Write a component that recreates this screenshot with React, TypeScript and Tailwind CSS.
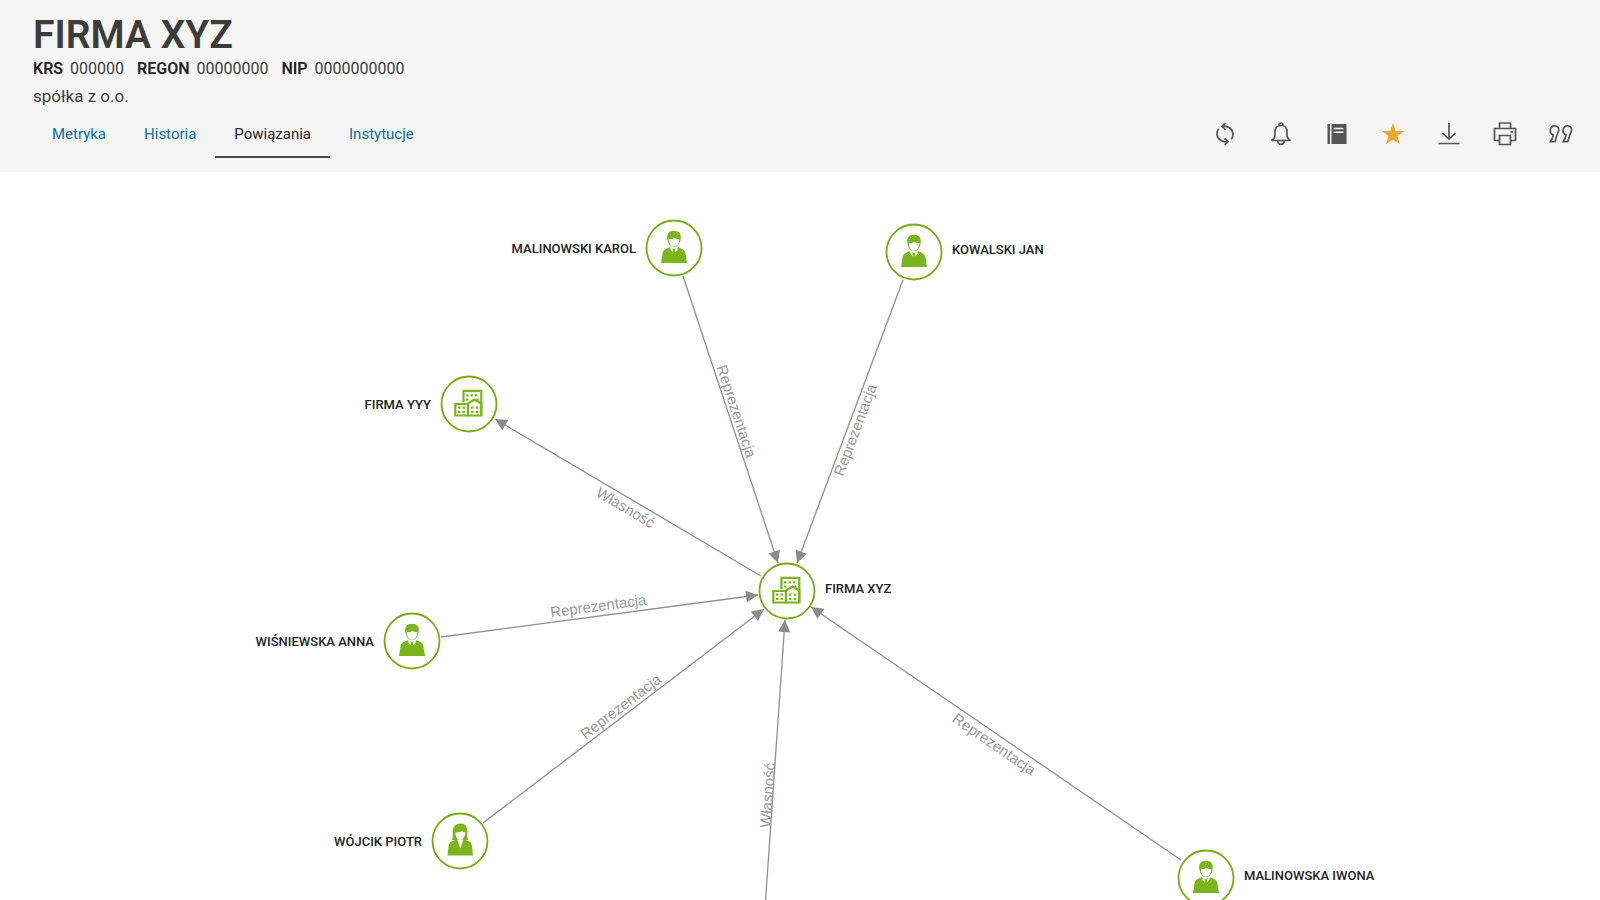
import type { ReactNode } from "react";

type Kind = "man" | "woman" | "company";

type GraphNode = {
  id: string;
  name: string;
  kind: Kind;
  x: number;
  y: number;
  side: "left" | "right";
};

type Edge = {
  from: [number, number];
  to: [number, number];
  label: string;
  at: number;
  dy: number;
};

const nodes: GraphNode[] = [
  { id: "karol", name: "MALINOWSKI KAROL", kind: "man", x: 674, y: 76, side: "left" },
  { id: "jan", name: "KOWALSKI JAN", kind: "man", x: 914, y: 80, side: "right" },
  { id: "yyy", name: "FIRMA YYY", kind: "company", x: 469, y: 232, side: "left" },
  { id: "xyz", name: "FIRMA XYZ", kind: "company", x: 787, y: 419, side: "right" },
  { id: "anna", name: "WIŚNIEWSKA ANNA", kind: "man", x: 412, y: 469, side: "left" },
  { id: "piotr", name: "WÓJCIK PIOTR", kind: "woman", x: 460, y: 669, side: "left" },
  { id: "iwona", name: "MALINOWSKA IWONA", kind: "man", x: 1206, y: 706, side: "right" },
];

// "at" is the label position along the line, "dy" its distance from it
const edges: Edge[] = [
  { from: [683, 104], to: [778, 391], label: "Reprezentacja", at: 0.48, dy: -3 },
  { from: [903, 108], to: [797, 391], label: "Reprezentacja", at: 0.52, dy: 13 },
  { from: [761, 404], to: [495, 247], label: "Własność", at: 0.49, dy: 15 },
  { from: [441, 465], to: [758, 423], label: "Reprezentacja", at: 0.5, dy: -5 },
  { from: [483, 651], to: [764, 437], label: "Reprezentacja", at: 0.51, dy: -4 },
  { from: [765, 736], to: [785, 448], label: "Własność", at: 0.39, dy: 0 },
  { from: [1181, 688], to: [811, 435], label: "Reprezentacja", at: 0.49, dy: 15 },
];

const tabs = ["Metryka", "Historia", "Powiązania", "Instytucje"];

const ToolIcon = ({ children }: { children: ReactNode }) => (
  <svg viewBox="0 0 24 24" className="size-6 overflow-visible" fill="none" stroke="currentColor" strokeWidth="1.7">
    {children}
  </svg>
);

const tools = [
  {
    name: "Odśwież",
    icon: (
      <ToolIcon>
        <path d="M9.500 4.200c5.500-.8 10.500 2.800 10.500 8 0 1.900-.6 3.600-1.700 5M14.500 19.800c-5.500.8-10.500-2.800-10.500-8 0-1.900.6-3.600 1.700-5" />
        <path d="M12.500 1 9 4.300l3.500 3.400M11.500 16.300l3.500 3.400-3.500 3.300" />
      </ToolIcon>
    ),
  },
  {
    name: "Powiadomienia",
    icon: (
      <ToolIcon>
        <path d="M2.500 18.500h19c-2.400-1.200-3.500-2.600-3.500-5.500v-3.500c0-3.700-2.500-6-6-6s-6 2.300-6 6V13c0 2.900-1.100 4.300-3.500 5.500Z" />
        <path d="M10.200 3.500V2.800a1.800 1.800 0 0 1 3.600 0v.7M8.800 18.800a3.200 3.600 0 0 0 6.400 0" />
      </ToolIcon>
    ),
  },
  {
    name: "Notatnik",
    icon: (
      <ToolIcon>
        <path d="M2.500 2h2.500v20H2.500zM6.500 2h15v20h-15z" fill="currentColor" stroke="none" />
        <path d="M8.500 6.500h10M8.500 10.200h10" stroke="#f5f5f5" strokeWidth="1.400" />
      </ToolIcon>
    ),
  },
  {
    name: "Ulubione",
    icon: (
      <ToolIcon>
        <path d="M12 .8l2.700 8.100 8.500.1-6.800 5.100 2.500 8.200L12 17.400l-6.900 4.900 2.500-8.200L.8 9l8.500-.1Z" fill="#eda62f" stroke="none" />
      </ToolIcon>
    ),
  },
  {
    name: "Pobierz",
    icon: (
      <ToolIcon>
        <path d="M12 1v16M5.500 11l6.500 6 6.500-6M1.500 21.500h21" />
      </ToolIcon>
    ),
  },
  {
    name: "Drukuj",
    icon: (
      <ToolIcon>
        <path d="M6.500 6.500V1h11v5.500M6.500 18.500h-5v-12h21v12h-4.500" />
        <path d="M6.500 13.500h11V22.500h-11zM17.500 9.800h2.500" />
      </ToolIcon>
    ),
  },
  {
    name: "Cytuj",
    icon: (
      <ToolIcon>
        <path d="M4.300 12.800C2 11.800.9 10.500 1.200 8.300 1.600 5.500 3.400 3.800 5.900 3.800s4.200 1.800 3.800 4.600c-.2 2-1.600 4-2.200 6-.6 1.900-.9 3.700-1.600 5.200H1.600c1.600-2.200 2.200-4.100 2.700-6.800Z" />
        <path d="M17.100 12.800c-2.300-1-3.400-2.300-3.100-4.500.4-2.800 2.200-4.500 4.700-4.500s4.200 1.800 3.800 4.600c-.2 2-1.600 4-2.200 6-.6 1.900-.9 3.700-1.600 5.200h-4.300c1.600-2.200 2.200-4.100 2.700-6.800Z" />
      </ToolIcon>
    ),
  },
];

const Man = () => (
  <>
    <path d="M-6.500-8C-8-14-5-17.300 0-17.300S8-14 6.500-8C5.500-3.500 3-.8 0-.8S-5.500-3.500-6.500-8Z" fill="#7ab51d" />
    <path d="M-5.200-8.800c2.400.3 4-.4 5.200-1.800 1.500 1.200 3.400 1.800 5.400 1.700C5.200-4.300 3-1.200 0-1.200s-4.800-3-5.200-7.600Z" fill="#fff" />
    <path d="M-13 15-11.500 5.500C-11 2.500-9 1-4.500-.8L0 1.300 4.500-.8C9 1 11 2.500 11.500 5.500L13 15Z" fill="#7ab51d" />
    <path d="M-3.500-1-1.300.8-1.300 4.500-3.600 1.800ZM3.500-1 1.300.8 1.300 4.500 3.600 1.800Z" fill="#fff" />
  </>
);

const Woman = () => (
  <>
    <path d="M-7.800-1C-7-3.500-7.500-6-7.200-10-6.800-14.500-4-17.500.5-17.500S7.300-14.500 7.300-10c0 4-.2 6.500.8 9Z" fill="#7ab51d" />
    <path d="M-4.700-8.500C-1-8.300 1-9.300 2.200-10.500 3-9.300 4-8.800 5.300-8.600 5.200-4.500 3.300-1.500.3-1.500S-4.500-4-4.700-8.500Z" fill="#fff" />
    <path d="M-12.500 14.500-11.500 5C-11 2-9 .3-5-1H5.500C9.500.3 11.500 2 12 5l1 9.500Z" fill="#7ab51d" />
    <path d="M-2.800-1.500.4 7.500 3.500-1.500Z" fill="#fff" />
  </>
);

const Company = () => (
  <g fill="none" stroke="#7ab51d" strokeWidth="2.200">
    <path d="M-5.500-2v-11.200h17.800V11.500M-13.700 0h12.700v11.500h-12.700z" />
    <path d="M-1 11.500V-.5l6.500-4L12.300-.5v12Z" />
    <path
      d="M-3-8.700h2.400M1.500-8.700h2.400M6-8.700h2.400M-3-4.500h2.400M7.500-4.500h2M-11 3.700h2.400M-6.500 3.700h2.400M-11 8h2.400M-6.500 8h2.400M2 3.700h2.400M6.800 3.700h2.400M2 8h2.400M6.800 8h2.400"
      strokeWidth="2.200"
    />
  </g>
);

const pictograms: Record<Kind, () => ReactNode> = { man: Man, woman: Woman, company: Company };

const EdgeLine = ({ from, to, label, at, dy }: Edge) => {
  const x = from[0] + (to[0] - from[0]) * at;
  const y = from[1] + (to[1] - from[1]) * at;
  const heading = (Math.atan2(to[1] - from[1], to[0] - from[0]) * 180) / Math.PI;
  // keep labels readable from the left
  const tilt = heading > 90 ? heading - 180 : heading < -90 ? heading + 180 : heading;

  return (
    <g>
      <line x1={from[0]} y1={from[1]} x2={to[0]} y2={to[1]} stroke="#8f8f8f" strokeWidth="1.300" />
      <path d="M0 0-12-6v12Z" fill="#8c8c8c" transform={`translate(${to[0]} ${to[1]}) rotate(${heading})`} />
      <text
        y={dy}
        textAnchor="middle"
        transform={`translate(${x} ${y}) rotate(${tilt})`}
        className="fill-[#999999] font-['Liberation_Sans',Arial,sans-serif] text-[15px]"
      >
        {label}
      </text>
    </g>
  );
};

const NodeMark = ({ name, kind, x, y, side }: GraphNode) => {
  const Pictogram = pictograms[kind];
  return (
    <g transform={`translate(${x} ${y})`}>
      <circle r="27.500" fill="#fff" stroke="#76ac14" strokeWidth="1.800" />
      <Pictogram />
      <text
        x={side === "left" ? -38 : 38}
        y={side === "left" ? 5 : 2}
        textAnchor={side === "left" ? "end" : "start"}
        className="fill-[#222222] text-[13px] font-medium"
      >
        {name}
      </text>
    </g>
  );
};

const Identifier = ({ label, value }: { label: string; value: string }) => (
  <div className="flex gap-[7px]">
    <dt className="font-semibold text-[#222222]">{label}</dt>
    <dd>{value}</dd>
  </div>
);

export default function App() {
  return (
    <div className="flex h-screen min-h-[600px] flex-col bg-white font-[Roboto,sans-serif] text-[#3c3c3b]">
      {/* Company header */}
      <header className="bg-[#f5f5f5] pt-3 pr-[27px] pb-[14px] pl-[33px]">
        <h1 className="text-[39px] leading-[46px] font-semibold">FIRMA XYZ</h1>
        <dl className="flex flex-wrap gap-x-[13px] text-base leading-[22px]">
          <Identifier label="KRS" value="000000" />
          <Identifier label="REGON" value="00000000" />
          <Identifier label="NIP" value="0000000000" />
        </dl>
        <p className="mt-1 text-[17px] leading-6">spółka z o.o.</p>

        <div className="mt-[13px] flex items-start justify-between">
          <nav className="flex text-[15px] leading-[26px]">
            {tabs.map((tab) => (
              <a
                key={tab}
                href={`#${tab.toLowerCase()}`}
                aria-current={tab === "Powiązania" ? "page" : undefined}
                className={
                  tab === "Powiązania"
                    ? "border-b-2 border-[#4a4a4f] px-[19px] pb-[9px] text-[#222222]"
                    : "border-b-2 border-transparent px-[19px] pb-[9px] text-[#0b6cab]"
                }
              >
                {tab}
              </a>
            ))}
          </nav>
          <div className="flex gap-8 pt-px text-[#555555]">
            {tools.map((tool) => (
              <button key={tool.name} type="button" aria-label={tool.name}>
                {tool.icon}
              </button>
            ))}
          </div>
        </div>
      </header>

      {/* Relations graph */}
      <main className="min-h-0 flex-1">
        <svg viewBox="0 0 1600 728" preserveAspectRatio="xMidYMin slice" className="block size-full">
          {edges.map((edge) => (
            <EdgeLine key={edge.from.join()} {...edge} />
          ))}
          {nodes.map((node) => (
            <NodeMark key={node.id} {...node} />
          ))}
        </svg>
      </main>
    </div>
  );
}
